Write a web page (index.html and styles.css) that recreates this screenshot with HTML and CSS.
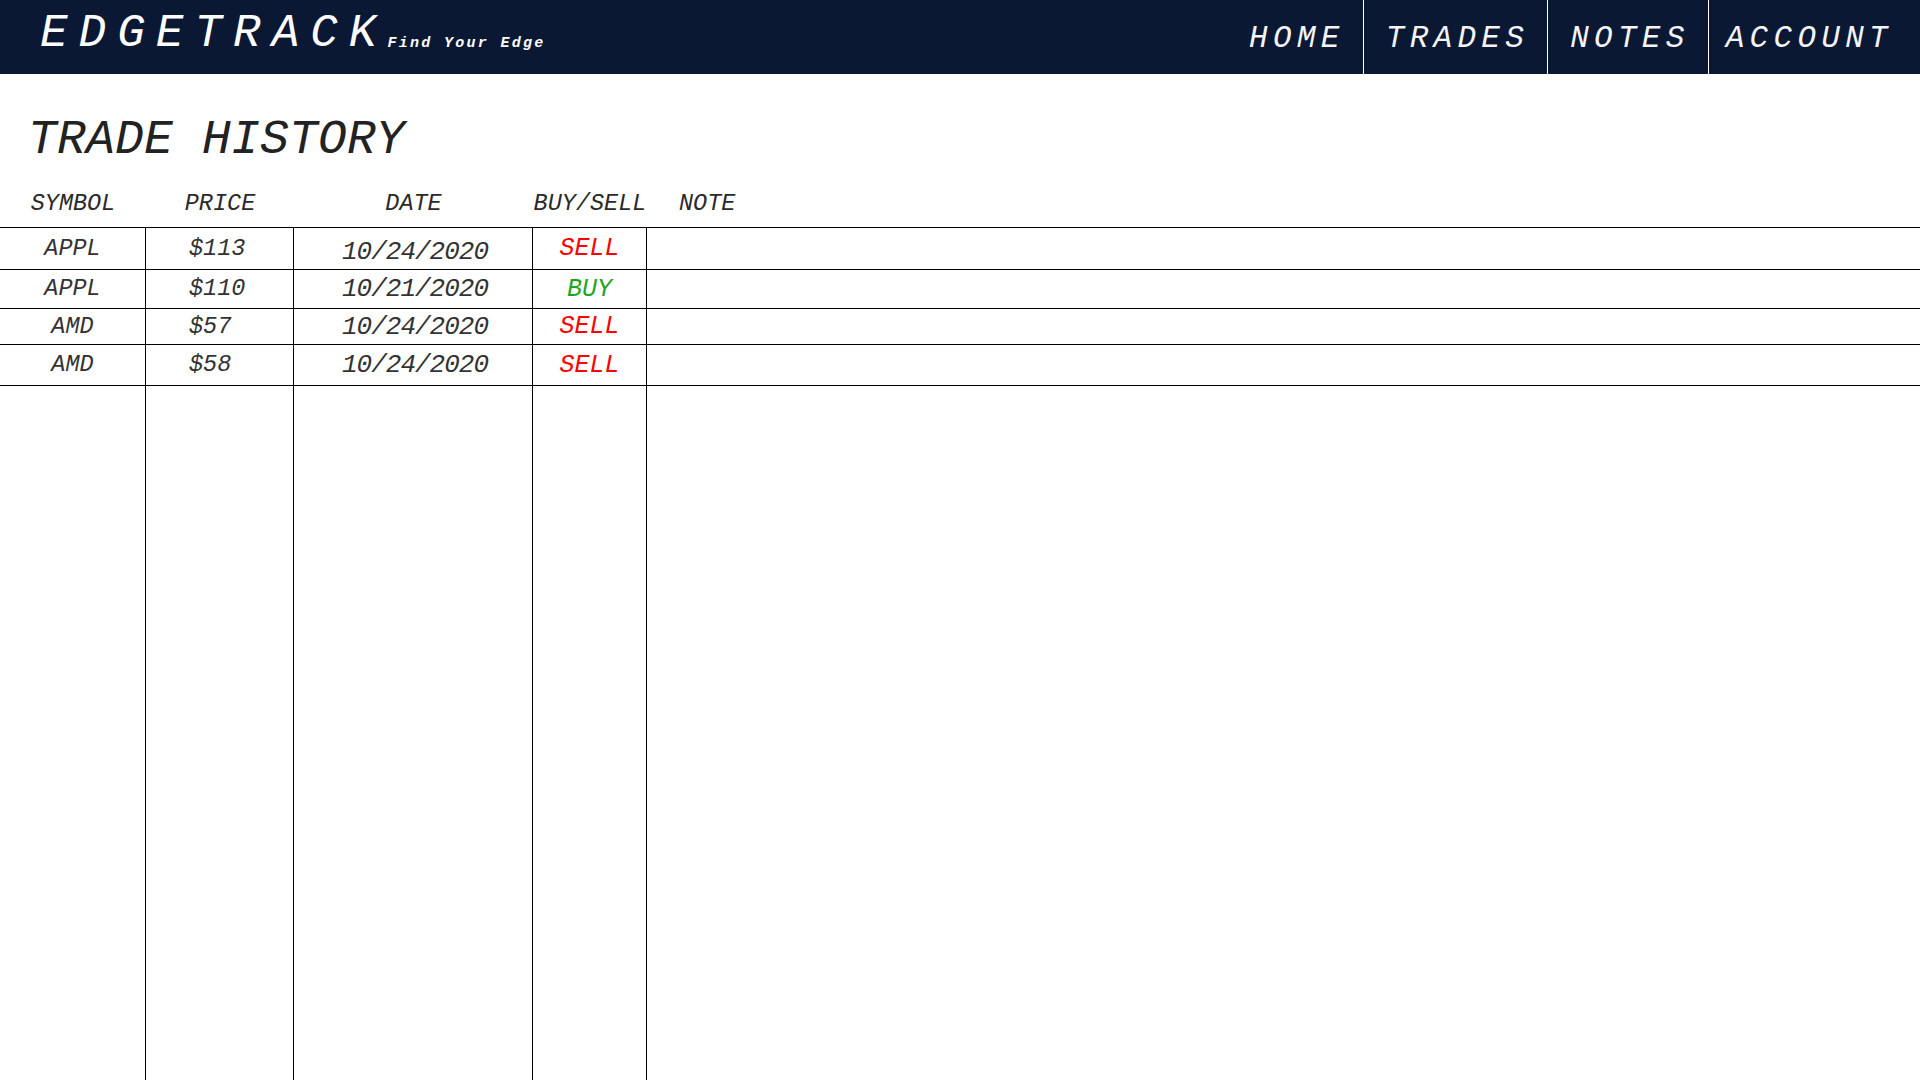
FILE: index.html
```html
<!DOCTYPE html>
<html lang="en">
<head>
<meta charset="utf-8">
<title>EdgeTrack - Trade History</title>
<link rel="stylesheet" href="styles.css">
</head>
<body>
<div class="app">
  <header class="topbar">
    <div class="brand"><span class="logo">EDGETRACK</span><span class="tagline">Find Your Edge</span></div>
    <nav class="nav">
      <a class="nav-item" href="#">HOME</a>
      <a class="nav-item" href="#">TRADES</a>
      <a class="nav-item" href="#">NOTES</a>
      <a class="nav-item" href="#">ACCOUNT</a>
    </nav>
  </header>
  <main class="page">
    <h1 class="title">TRADE HISTORY</h1>
    <div class="grid thead">
      <div class="th">SYMBOL</div>
      <div class="th">PRICE</div>
      <div class="th">DATE</div>
      <div class="th">BUY/SELL</div>
      <div class="th note">NOTE</div>
    </div>
    <div class="grid row r1">
      <div class="cell">APPL</div>
      <div class="cell price">$113</div>
      <div class="cell date">10/24/2020</div>
      <div class="cell side sell">SELL</div>
      <div class="cell"></div>
    </div>
    <div class="grid row r2">
      <div class="cell">APPL</div>
      <div class="cell price">$110</div>
      <div class="cell date">10/21/2020</div>
      <div class="cell side buy">BUY</div>
      <div class="cell"></div>
    </div>
    <div class="grid row r3">
      <div class="cell">AMD</div>
      <div class="cell price">$57</div>
      <div class="cell date">10/24/2020</div>
      <div class="cell side sell">SELL</div>
      <div class="cell"></div>
    </div>
    <div class="grid row r4">
      <div class="cell">AMD</div>
      <div class="cell price">$58</div>
      <div class="cell date">10/24/2020</div>
      <div class="cell side sell">SELL</div>
      <div class="cell"></div>
    </div>
    <div class="grid row filler">
      <div class="cell"></div>
      <div class="cell"></div>
      <div class="cell"></div>
      <div class="cell"></div>
      <div class="cell"></div>
    </div>
  </main>
</div>
</body>
</html>
```
FILE: styles.css
```css
* { box-sizing: border-box; }

html, body {
  margin: 0;
  padding: 0;
}

body {
  font-family: "Courier New", "Nimbus Mono PS", "FreeMono", "Liberation Mono", monospace;
  font-style: italic;
  background: #fff;
  color: #333;
}

.app {
  display: flex;
  flex-direction: column;
  min-height: 100vh;
}

/* Top bar */
.topbar {
  height: 74px;
  background: #0b1834;
  color: #fff;
  display: flex;
  justify-content: space-between;
  flex: none;
}

.brand {
  padding: 11px 0 0 40px;
  line-height: 46px;
  white-space: nowrap;
}

.logo {
  font-size: 46px;
  letter-spacing: 11px;
}

.tagline {
  font-size: 15px;
  font-weight: bold;
  letter-spacing: 2.3px;
  vertical-align: -1px;
}

.nav {
  display: flex;
}

.nav-item {
  display: block;
  padding: 23px 18px 0 22px;
  font-size: 31px;
  line-height: 31px;
  letter-spacing: 5.3px;
  color: #f4f4f4;
  text-decoration: none;
}

.nav-item:last-child {
  padding-right: 27px;
  padding-left: 17px;
}

.nav-item + .nav-item {
  border-left: 1px solid #fff;
}

/* Page */
.page {
  flex: 1;
  display: flex;
  flex-direction: column;
}

.title {
  margin: 42px 0 0 0;
  padding-left: 28px;
  font-size: 48px;
  line-height: 48px;
  font-weight: normal;
  letter-spacing: 0.2px;
  color: #222;
}

.grid {
  display: grid;
  grid-template-columns: 146px 148px 239px 114px 1fr;
}

.thead {
  height: 64px;
  border-bottom: 1px solid #000;
  align-items: end;
}

.th {
  font-size: 23.5px;
  line-height: 23.5px;
  padding-bottom: 12px;
  text-align: center;
  white-space: nowrap;
  color: #2a2a2a;
}

.th.note {
  text-align: left;
  padding-left: 32px;
}

.row {
  border-bottom: 1px solid #000;
}

.cell {
  border-right: 1px solid #000;
  display: flex;
  align-items: center;
  justify-content: center;
  font-size: 23.5px;
  line-height: 1;
  white-space: nowrap;
  color: #333;
}

.cell:last-child {
  border-right: 0;
}

.cell.price {
  justify-content: flex-start;
  padding-left: 43px;
}

.cell.date {
  font-size: 26px;
  letter-spacing: -1px;
  padding-left: 4px;
}

.cell.side {
  font-size: 25px;
}

.sell { color: #f00; }
.buy { color: #1fa51f; }

.r1 { height: 42px; }
.r2 { height: 39px; }
.r3 { height: 36px; }
.r4 { height: 41px; }

.r1 .cell.date { padding-top: 6px; }

.filler {
  flex: 1;
  border-bottom: 0;
}
```
